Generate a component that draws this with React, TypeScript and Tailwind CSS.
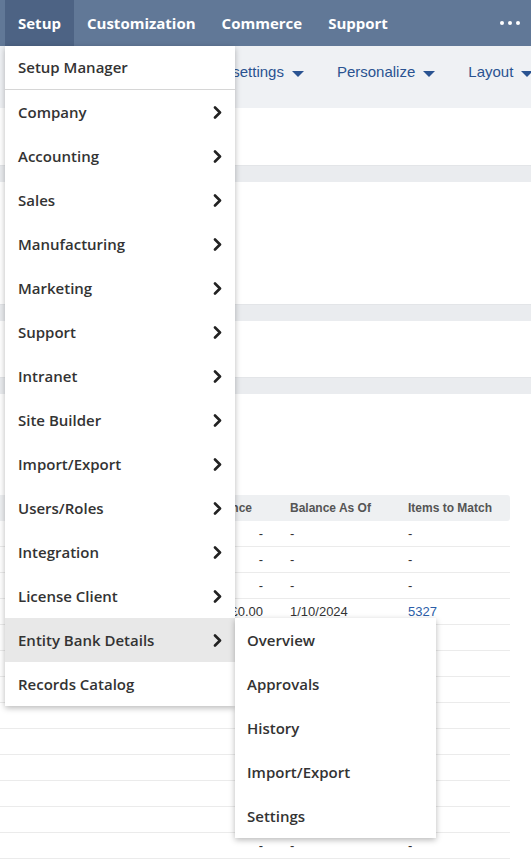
import { ReactNode } from "react";

const tabs = ["Setup", "Customization", "Commerce", "Support"];

const setupItems = [
  "Company",
  "Accounting",
  "Sales",
  "Manufacturing",
  "Marketing",
  "Support",
  "Intranet",
  "Site Builder",
  "Import/Export",
  "Users/Roles",
  "Integration",
  "License Client",
  "Entity Bank Details",
];

const bankItems = ["Overview", "Approvals", "History", "Import/Export", "Settings"];

type Row = { bal: string; asOf: string; items: string; link?: boolean };

const dash: Row = { bal: "-", asOf: "-", items: "-" };
const blank: Row = { bal: "", asOf: "", items: "" };

const rows: Row[] = [
  dash,
  dash,
  dash,
  { bal: "£0.00", asOf: "1/10/2024", items: "5327", link: true },
  ...Array.from({ length: 8 }, () => blank),
  dash,
  blank,
];

function Caret() {
  return (
    <svg width="12" height="6" viewBox="0 0 12 6" className="ml-[8px] mt-[3px] shrink-0">
      <path d="M0 0h12L6 6z" fill="#2a5391" />
    </svg>
  );
}

function Chevron() {
  return (
    <svg width="9" height="13" viewBox="0 0 9 13" className="shrink-0">
      <path d="M2 1.5l5 5-5 5" fill="none" stroke="#222" strokeWidth="2.6" strokeLinecap="round" strokeLinejoin="round" />
    </svg>
  );
}

function Band() {
  return <div className="h-[17px] bg-[#eaecef] shadow-[inset_0_1px_1px_rgba(0,0,0,0.03)]" />;
}

function Cells({ children, head }: { children: ReactNode; head?: boolean }) {
  return (
    <div
      className={
        head
          ? "grid h-[26px] grid-cols-[170px_105px_125px_110px] items-center rounded-r-[3px] bg-[#eef0f2] text-[12px] font-bold text-[#555]"
          : "grid h-[26px] grid-cols-[170px_105px_125px_110px] items-center border-b border-[#ebebeb] text-[13px] text-[#333]"
      }
    >
      {children}
    </div>
  );
}

export default function App() {
  return (
    <div className="relative h-[868px] w-[531px] overflow-hidden bg-white font-['Open_Sans',sans-serif]">
      {/* top navigation */}
      <nav className="flex h-[46px] items-stretch bg-[#617897] pl-[5px] text-[15px] font-bold text-white">
        {tabs.map((t) => (
          <div key={t} className={`flex items-center px-[13px] ${t === "Setup" ? "bg-[#4d6384]" : ""}`}>
            {t}
          </div>
        ))}
        <div className="ml-auto flex items-center pr-[11px]">
          <svg width="20" height="4" viewBox="0 0 20 4">
            <circle cx="2" cy="2" r="2" fill="#fff" />
            <circle cx="10" cy="2" r="2" fill="#fff" />
            <circle cx="18" cy="2" r="2" fill="#fff" />
          </svg>
        </div>
      </nav>

      {/* page toolbar */}
      <div className="flex h-[62px] items-start gap-[33px] whitespace-nowrap bg-[#eff1f4] pl-[193px] pt-[15px] font-['Liberation_Sans',Arial,sans-serif] text-[15px] text-[#2a5391]">
        <span className="flex items-center">Page settings<Caret /></span>
        <span className="flex items-center">Personalize<Caret /></span>
        <span className="flex items-center">Layout<Caret /></span>
      </div>

      <div className="h-[57px]" />
      <Band />
      <div className="h-[122px]" />
      <Band />
      <div className="h-[56px]" />
      <Band />
      <div className="h-[101px]" />

      {/* bank accounts table */}
      <div className="w-[510px] font-['Liberation_Sans',Arial,sans-serif]">
        <Cells head>
          <span />
          <span className="pr-[23px] text-right">Balance</span>
          <span className="pl-[15px]">Balance As Of</span>
          <span className="pl-[8px]">Items to Match</span>
        </Cells>
        {rows.map((r, i) => (
          <Cells key={i}>
            <span />
            <span className="pr-[12px] text-right">{r.bal}</span>
            <span className="pl-[15px]">{r.asOf}</span>
            <span className={`pl-[8px] ${r.link ? "text-[#2b5ea8]" : ""}`}>{r.items}</span>
          </Cells>
        ))}
      </div>

      {/* Setup dropdown */}
      <div className="absolute left-[5px] top-[46px] w-[230px] bg-white text-[15px] font-semibold text-[#333] shadow-[0_2px_6px_rgba(0,0,0,0.28)]">
        <div className="flex h-[44px] items-center border-b border-[#d6d6d6] pl-[13px]">Setup Manager</div>
        {setupItems.map((item) => (
          <div
            key={item}
            className={`flex h-[44px] items-center justify-between pl-[13px] pr-[13px] ${
              item === "Entity Bank Details" ? "bg-[#e8e8e8]" : ""
            }`}
          >
            {item}
            <Chevron />
          </div>
        ))}
        <div className="flex h-[44px] items-center pl-[13px]">Records Catalog</div>
      </div>

      {/* Entity Bank Details submenu */}
      <div className="absolute left-[235px] top-[618px] w-[201px] bg-white text-[15px] font-semibold text-[#333] shadow-[0_2px_6px_rgba(0,0,0,0.28)]">
        {bankItems.map((item) => (
          <div key={item} className="flex h-[44px] items-center pl-[12px]">
            {item}
          </div>
        ))}
      </div>
    </div>
  );
}
